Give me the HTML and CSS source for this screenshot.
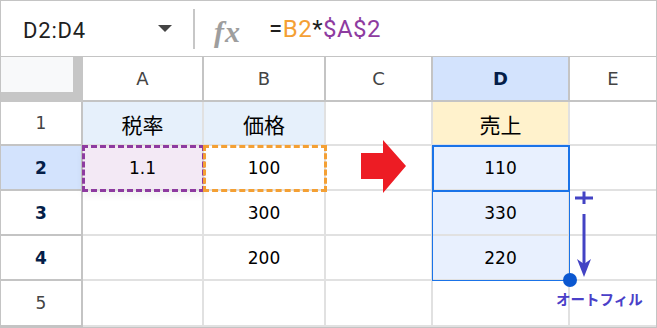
FILE: index.html
```html
<!doctype html>
<html lang="ja">
<head>
    <meta charset="UTF-8">
    <title>オートフィル</title>
    <link rel="stylesheet" href="styles.css">
</head>
<body>
    <div class="sheet">
        <div class="formula-bar">
            <div class="name-box">
                <span class="name">D2:D4</span>
                <span class="caret"></span>
            </div>
            <div class="divider"></div>
            <span class="fx">fx</span>
            <div class="formula">=<span class="ref-b">B2</span>*<span class="ref-a">$A$2</span></div>
        </div>

        <div class="grid">
            <!-- header row -->
            <div class="corner"><div class="corner-inner"></div></div>
            <div class="col-hdr">A</div>
            <div class="col-hdr">B</div>
            <div class="col-hdr">C</div>
            <div class="col-hdr sel">D</div>
            <div class="col-hdr last">E</div>

            <!-- row 1 -->
            <div class="row-hdr">1</div>
            <div class="cell jp head-blue">税率</div>
            <div class="cell jp head-blue">価格</div>
            <div class="cell"></div>
            <div class="cell jp head-yellow">売上</div>
            <div class="cell last"></div>

            <!-- row 2 -->
            <div class="row-hdr sel sel-bg">2</div>
            <div class="cell copy-a">1.1</div>
            <div class="cell copy-b">100</div>
            <div class="cell"></div>
            <div class="cell in-range">110</div>
            <div class="cell last"></div>

            <!-- row 3 -->
            <div class="row-hdr sel">3</div>
            <div class="cell"></div>
            <div class="cell">300</div>
            <div class="cell"></div>
            <div class="cell in-range">330</div>
            <div class="cell last"></div>

            <!-- row 4 -->
            <div class="row-hdr sel">4</div>
            <div class="cell"></div>
            <div class="cell">200</div>
            <div class="cell"></div>
            <div class="cell in-range">220</div>
            <div class="cell last"></div>

            <!-- row 5 -->
            <div class="row-hdr">5</div>
            <div class="cell"></div>
            <div class="cell"></div>
            <div class="cell"></div>
            <div class="cell"></div>
            <div class="cell last"></div>

            <!-- overlays -->
            <svg class="red-arrow" width="45" height="53" viewBox="0 0 45 53">
                <polygon points="0,13 22,13 22,0 45,26 22,53 22,39 0,39" fill="#ed1c24"/>
            </svg>
            <div class="range"></div>
            <div class="active"></div>
            <div class="fill-handle"></div>
            <svg class="fill-arrow" width="20" height="90" viewBox="0 0 20 90">
                <path d="M1 8 H19 M10 1.5 V14" stroke="#4343c4" stroke-width="3" fill="none"/>
                <path d="M10 24 V76" stroke="#4343c4" stroke-width="3" fill="none"/>
                <polygon points="3,69 10,74 17,69 10,87" fill="#4343c4"/>
            </svg>
            <div class="fill-label">オートフィル</div>
        </div>
    </div>
</body>
</html>
```

FILE: styles.css
```css
body {
    margin: 0;
    background: #fff;
}

.sheet {
    width: 655px;
    height: 326px;
    border: 1px solid #c4c4c4;
    font-family: 'Roboto', 'Noto Sans CJK JP', sans-serif;
    color: #000;
    overflow: hidden;
}

/* formula bar */
.formula-bar {
    height: 55px;
    border-bottom: 1px solid #c4c4c4;
    display: flex;
    align-items: center;
}

.name-box {
    width: 192px;
    box-sizing: border-box;
    padding: 3px 21px 0 22px;
    display: flex;
    align-items: center;
    justify-content: space-between;
}

.name {
    font-size: 22px;
    color: #1f1f1f;
    letter-spacing: 0.8px;
}

.caret {
    width: 0;
    height: 0;
    margin-top: -4px;
    border-left: 7.5px solid transparent;
    border-right: 7.5px solid transparent;
    border-top: 7px solid #444;
}

.divider {
    width: 2px;
    height: 40px;
    background: #c7c7c7;
}

.fx {
    margin-left: 19px;
    font-family: 'Liberation Serif', serif;
    font-style: italic;
    font-weight: bold;
    font-size: 30px;
    letter-spacing: 1px;
    color: #9e9e9e;
    margin-top: 6px;
}

.formula {
    margin-left: 28px;
    font-size: 24px;
    letter-spacing: 0.5px;
    color: #1f1f1f;
}

.ref-b {
    color: #f4a034;
}

.ref-a {
    color: #8e3ba0;
}

/* grid */
.grid {
    position: relative;
    display: grid;
    grid-template-columns: 82px 121px 122px 107px 137px 1fr;
    grid-template-rows: 45px 44px 45px 45px 45px 1fr;
    height: 270px;
}

.corner {
    background: #c6c6c6;
}

.corner-inner {
    width: 72px;
    height: 35px;
    background: #f8f9fa;
}

.col-hdr,
.row-hdr,
.cell {
    box-sizing: border-box;
    display: flex;
    align-items: center;
    justify-content: center;
}

.col-hdr {
    font-family: 'DejaVu Sans', sans-serif;
    font-size: 18px;
    color: #444;
    border-right: 2px solid #c4c4c4;
    border-bottom: 2px solid #c4c4c4;
}

.row-hdr {
    font-family: 'DejaVu Sans', sans-serif;
    font-size: 17px;
    color: #444;
    border-right: 2px solid #c4c4c4;
    border-bottom: 2px solid #c4c4c4;
}

.col-hdr.sel {
    background: #d3e3fd;
    color: #041e49;
    font-weight: bold;
}

.row-hdr.sel {
    color: #041e49;
    font-weight: bold;
}

.row-hdr.sel-bg {
    background: #d3e3fd;
}

.cell {
    font-family: 'DejaVu Sans', sans-serif;
    font-size: 17px;
    border-right: 2px solid #e1e1e1;
    border-bottom: 2px solid #e1e1e1;
}

.col-hdr.last,
.cell.last {
    border-right: none;
}

.cell.jp {
    font-family: 'Noto Sans CJK JP', sans-serif;
    font-size: 21px;
    padding-top: 2px;
}

.head-blue {
    background: #e6f0fb;
}

.head-yellow {
    background: #fff2cc;
}

.in-range {
    background: #e8f0fe;
}

.copy-a {
    background: #f3e9f5;
    outline: 3px dashed #8e3ba0;
    outline-offset: -2px;
    position: relative;
    z-index: 1;
    box-shadow: 0 4px 8px rgba(0, 0, 0, 0.06);
}

.copy-b {
    outline: 3px dashed #f4a034;
    outline-offset: -2px;
    position: relative;
    z-index: 1;
}

/* overlays */
.red-arrow {
    position: absolute;
    left: 360px;
    top: 83px;
}

.range {
    position: absolute;
    left: 431px;
    top: 88px;
    width: 138px;
    height: 136px;
    box-sizing: border-box;
    border: 1px solid #1a73e8;
}

.active {
    position: absolute;
    left: 431px;
    top: 88px;
    width: 138px;
    height: 47px;
    box-sizing: border-box;
    border: 2px solid #1a73e8;
}

.fill-handle {
    position: absolute;
    left: 562px;
    top: 216px;
    width: 14px;
    height: 14px;
    border-radius: 50%;
    background: #0b57d0;
}

.fill-arrow {
    position: absolute;
    left: 573px;
    top: 133px;
}

.fill-label {
    position: absolute;
    left: 555px;
    top: 233px;
    font-family: 'Noto Sans CJK JP', sans-serif;
    font-weight: bold;
    font-size: 14.5px;
    line-height: 18px;
    color: #4a40c8;
    white-space: nowrap;
}
```
